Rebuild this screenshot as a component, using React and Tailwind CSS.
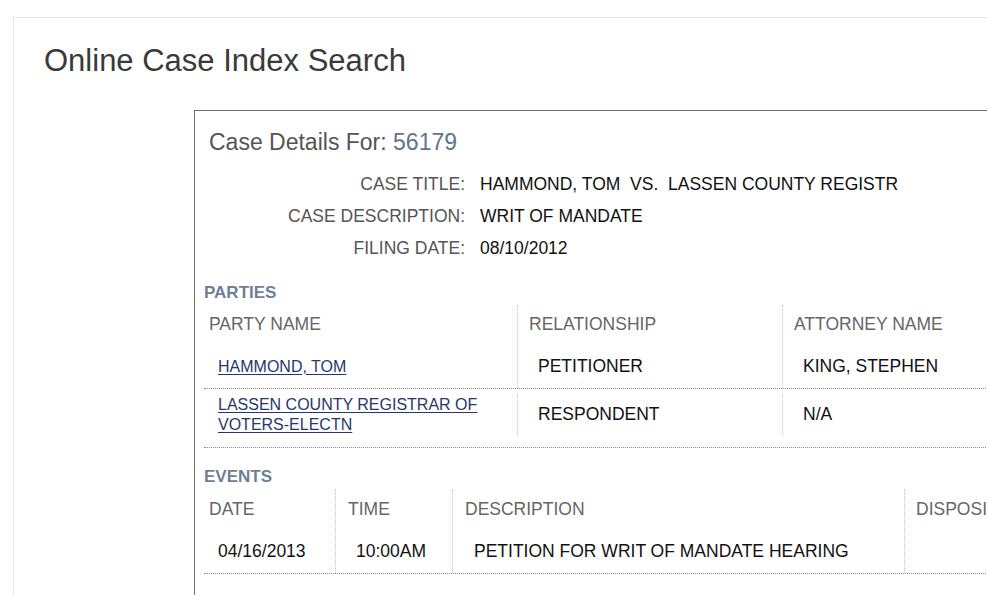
import React from "react";

const parties = [
  { name: ["HAMMOND, TOM"], relationship: "PETITIONER", attorney: "KING, STEPHEN" },
  {
    name: ["LASSEN COUNTY REGISTRAR OF", "VOTERS-ELECTN"],
    relationship: "RESPONDENT",
    attorney: "N/A",
  },
];

const details = [
  ["CASE TITLE:", "HAMMOND, TOM  VS.  LASSEN COUNTY REGISTR"],
  ["CASE DESCRIPTION:", "WRIT OF MANDATE"],
  ["FILING DATE:", "08/10/2012"],
];

const App = () => {
  return (
    <div className="relative w-[987px] h-[595px] overflow-hidden bg-white font-['Liberation_Sans',Arial,sans-serif]">
      <div className="mt-[17px] ml-[13px] w-[1100px] h-[600px] border-t border-l border-[#e6e6e6]">
        <h1 className="pl-[30px] pt-[25px] h-[61px] text-[31px] leading-[36px] text-[#3a3a3a] font-normal">
          Online Case Index Search
        </h1>

        {/* case card */}
        <div className="mt-[31px] ml-[180px] w-[900px] h-[600px] border-t border-l border-[#6e6e6e] pl-[9px]">
          <div className="pl-[5px] pt-[17px] text-[23px] leading-[28px] text-[#555]">
            Case Details For: <span className="text-[#5f7490]">56179</span>
          </div>

          <div className="mt-[12px]">
            {details.map(([label, value]) => (
              <div key={label} className="flex h-[32px] items-center text-[17.5px]">
                <div className="w-[261px] text-right text-[#555]">{label}</div>
                <div className="pl-[15px] text-[#111] whitespace-pre">{value}</div>
              </div>
            ))}
          </div>

          {/* parties */}
          <div className="mt-[17px] h-[24px] leading-[24px] text-[17px] font-bold text-[#6f7f95]">
            PARTIES
          </div>
          <div className="grid grid-cols-[313px_265px_1fr] h-[38px] items-center text-[17.5px] text-[#666]">
            <div className="pl-[5px]">PARTY NAME</div>
            <div className="pl-[11px] h-full flex items-center border-l border-dotted border-[#c4c4c4]">RELATIONSHIP</div>
            <div className="pl-[11px] h-full flex items-center border-l border-dotted border-[#c4c4c4]">ATTORNEY NAME</div>
          </div>
          {parties.map((p, i) => (
            <div
              key={i}
              className={`grid grid-cols-[313px_265px_1fr] border-b border-dotted border-[#8a8a8a] text-[17.5px] text-[#111] ${
                i === 0 ? "h-[46px] pt-[2px]" : "h-[59px] pt-[5px] pb-[12px]"
              }`}
            >
              <div className="pl-[14px] flex flex-col justify-center text-[16px] leading-[20px]">
                {p.name.map((line) => (
                  <a key={line} href="#" className="text-[#26386b] underline underline-offset-2">
                    {line}
                  </a>
                ))}
              </div>
              <div className="pl-[20px] flex items-center border-l border-dotted border-[#c4c4c4]">
                {p.relationship}
              </div>
              <div className="pl-[20px] flex items-center border-l border-dotted border-[#c4c4c4]">
                {p.attorney}
              </div>
            </div>
          ))}

          {/* events */}
          <div className="mt-[17px] h-[24px] leading-[24px] text-[17px] font-bold text-[#6f7f95]">
            EVENTS
          </div>
          <div className="grid grid-cols-[131px_117px_452px_1fr] h-[40px] items-center text-[17.5px] text-[#666]">
            <div className="pl-[5px]">DATE</div>
            <div className="pl-[12px] h-full flex items-center border-l border-dotted border-[#c4c4c4]">TIME</div>
            <div className="pl-[12px] h-full flex items-center border-l border-dotted border-[#c4c4c4]">DESCRIPTION</div>
            <div className="pl-[11px] h-full flex items-center border-l border-dotted border-[#c4c4c4]">DISPOSITION</div>
          </div>
          <div className="grid grid-cols-[131px_117px_452px_1fr] h-[45px] pt-[1px] border-b border-dotted border-[#8a8a8a] text-[17.5px] text-[#111]">
            <div className="pl-[14px] flex items-center">04/16/2013</div>
            <div className="pl-[20px] flex items-center border-l border-dotted border-[#c4c4c4]">10:00AM</div>
            <div className="pl-[21px] flex items-center border-l border-dotted border-[#c4c4c4]">
              PETITION FOR WRIT OF MANDATE HEARING
            </div>
            <div className="border-l border-dotted border-[#c4c4c4]" />
          </div>
        </div>
      </div>
    </div>
  );
};

export default App;
